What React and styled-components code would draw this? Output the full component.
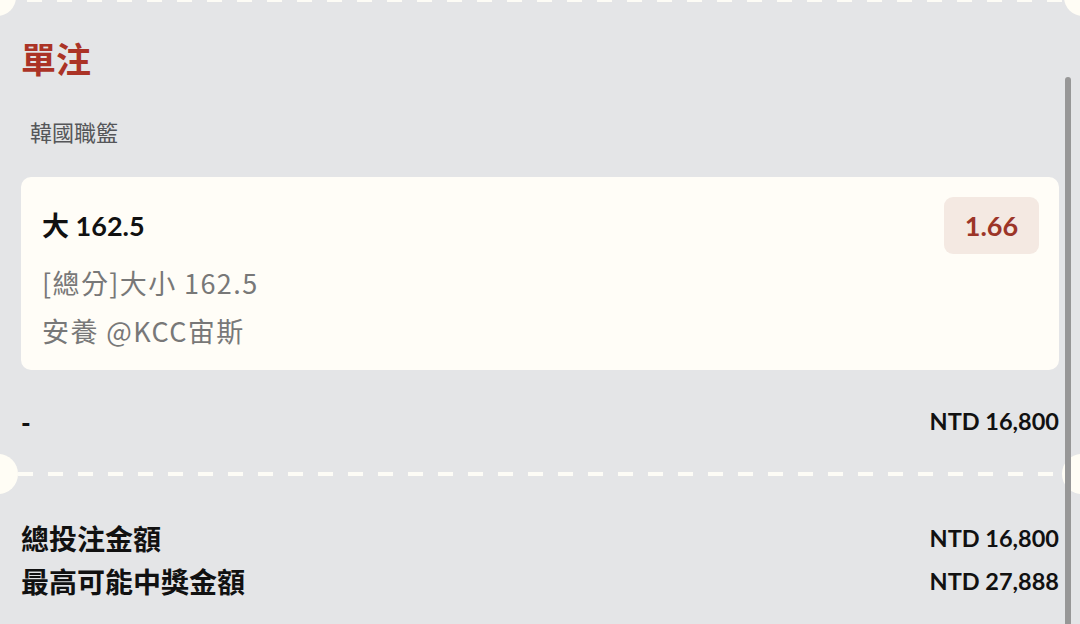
import React from "react";
import styled, { createGlobalStyle } from "styled-components";

const Global = createGlobalStyle`
  html, body { margin: 0; padding: 0; }
  body {
    background: #e4e5e7;
    font-family: Lato, "Noto Sans CJK TC", sans-serif;
    -webkit-font-smoothing: antialiased;
  }
`;

const Page = styled.div`
  position: relative;
  width: 1080px;
  height: 624px;
  overflow: hidden;
  background: #e4e5e7;
`;

const Perforation = styled.div`
  position: relative;
  height: 4px;
  margin: ${(p) => p.$margin};
  background-image: repeating-linear-gradient(
    to right,
    #fdfcf6 0 15px,
    transparent 15px 30px
  );
  background-position: ${(p) => p.$offset}px 0;
  background-repeat: repeat-x;
  &::before,
  &::after {
    content: "";
    position: absolute;
    top: 50%;
    width: ${(p) => p.$r * 2}px;
    height: ${(p) => p.$r * 2}px;
    margin-top: ${(p) => -p.$r + p.$dy}px;
    border-radius: 50%;
    background: #fffdf5;
  }
  &::before { left: ${(p) => -p.$r - p.$dx}px; }
  &::after { right: ${(p) => -p.$r - p.$dx}px; }
`;

const Section = styled.div`
  padding: 0 21px;
`;

const Title = styled.h1`
  margin: 34px 0 0;
  font-family: "Noto Sans CJK TC", sans-serif;
  font-size: 35px;
  line-height: 44px;
  font-weight: 700;
  color: #ab3326;
`;

const League = styled.div`
  margin: 36px 0 0 9px;
  font-family: "Noto Sans CJK TC", sans-serif;
  font-size: 22px;
  line-height: 30px;
  color: #555659;
`;

const Card = styled.div`
  margin-top: 31px;
  background: #fffdf7;
  border-radius: 10px;
  padding: 20px 20px 19px 21px;
  display: flex;
  flex-direction: column;
`;

const CardHead = styled.div`
  display: flex;
  align-items: center;
  justify-content: space-between;
`;

const Pick = styled.div`
  font-family: Lato, "Noto Sans CJK TC", sans-serif;
  font-size: 27px;
  font-weight: 700;
  color: #111;
  line-height: 34px;
`;

const Odds = styled.div`
  background: #f4e9e2;
  border-radius: 9px;
  width: 95px;
  height: 57px;
  display: flex;
  align-items: center;
  justify-content: center;
  font-family: Lato, sans-serif;
  font-size: 27px;
  font-weight: 700;
  color: #9c3528;
`;

const Detail = styled.div`
  margin-top: ${(p) => p.$mt}px;
  font-family: "Noto Sans CJK TC", sans-serif;
  font-size: 27px;
  letter-spacing: 1.4px;
  line-height: 40px;
  color: #787878;
`;

const Row = styled.div`
  display: flex;
  justify-content: space-between;
  align-items: center;
  margin-top: ${(p) => p.$mt || 0}px;
  height: ${(p) => p.$h}px;
  font-weight: 700;
  color: #111;
`;

const Label = styled.span`
  font-family: "Noto Sans CJK TC", sans-serif;
  font-size: 28px;
  font-weight: 700;
`;

const Dash = styled.span`
  font-family: Lato, sans-serif;
  font-size: 26px;
  font-weight: 900;
  padding-top: 4px;
`;

const Amount = styled.span`
  font-family: Lato, sans-serif;
  font-size: 23.5px;
  font-weight: 700;
`;

const Scrollbar = styled.div`
  position: absolute;
  left: 1065px;
  top: 77px;
  width: 6px;
  height: 560px;
  border-radius: 3px;
  background: #979797;
`;

export default function App() {
  return (
    <Page>
      <Global />
      <Perforation $margin="-2px 0 0 0" $r={19} $dx={3} $dy={-3} $offset={-3} />
      <Section>
        <Title>單注</Title>
        <League>韓國職籃</League>
        <Card>
          <CardHead>
            <Pick>大 162.5</Pick>
            <Odds>1.66</Odds>
          </CardHead>
          <Detail $mt={9}>[總分]大小 162.5</Detail>
          <Detail $mt={8}>安養 @KCC宙斯</Detail>
        </Card>
        <Row $mt={36} $h={30}>
          <Dash>-</Dash>
          <Amount>NTD 16,800</Amount>
        </Row>
      </Section>
      <Perforation $margin="36px 0 0 0" $r={20} $dx={2} $dy={0} $offset={18} />
      <Section>
        <Row $mt={40} $h={43}>
          <Label>總投注金額</Label>
          <Amount>NTD 16,800</Amount>
        </Row>
        <Row $h={43}>
          <Label>最高可能中獎金額</Label>
          <Amount>NTD 27,888</Amount>
        </Row>
      </Section>
      <Scrollbar />
    </Page>
  );
}
